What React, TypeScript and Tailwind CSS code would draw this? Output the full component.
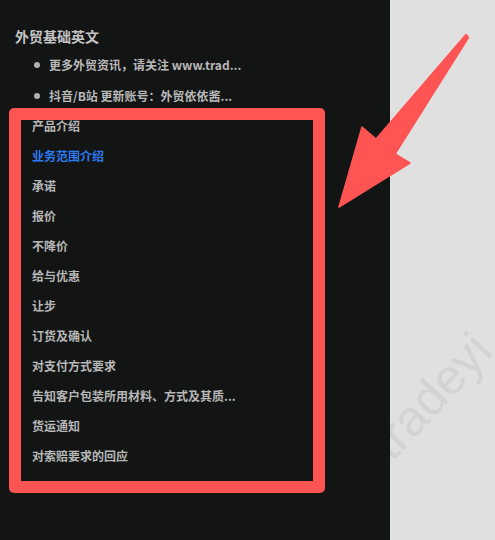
import React from 'react';

const font = { fontFamily: '"Noto Sans CJK SC", "Liberation Sans", sans-serif' };

const App: React.FC = () => {
  const bullets = ['更多外贸资讯，请关注 www.trad...', '抖音/B站 更新账号：外贸依依酱...'];
  const items = [
    '产品介绍',
    '业务范围介绍',
    '承诺',
    '报价',
    '不降价',
    '给与优惠',
    '让步',
    '订货及确认',
    '对支付方式要求',
    '告知客户包装所用材料、方式及其质...',
    '货运通知',
    '对索赔要求的回应',
  ];

  return (
    <div className="relative flex w-[495px] h-[540px] overflow-hidden" style={font}>
      <div className="w-[390px] h-full bg-[#131515] pt-[26px]">
        <h2 className="pl-[15px] h-[20px] leading-[20px] text-[14px] font-bold text-[#c4c4c4]">外贸基础英文</h2>
        <ul className="mt-[4px]">
          {bullets.map((b, i) => (
            <li key={i} className="flex items-center h-[30px] mb-px pl-[34px] text-[12px] font-bold text-[#b8b8b8]">
              <span className="w-[6px] h-[6px] rounded-full bg-[#b0b0b0] mr-[9px]"></span>
              {b}
            </li>
          ))}
        </ul>
        <ul className="-mt-px">
          {items.map((it, i) => (
            <li
              key={i}
              className={`flex items-center h-[30px] pl-[32px] text-[12px] font-bold ${i === 1 ? 'text-[#2b7cf2]' : 'text-[#b6b6b6]'}`}
            >
              {it}
            </li>
          ))}
        </ul>
      </div>

      <div className="relative flex-1 h-full bg-[#e0e0e0] overflow-hidden">
        {/* watermark */}
        <span
          className="absolute left-[8px] top-[418px] origin-[0_100%] -rotate-[47deg] whitespace-nowrap text-[50px] leading-none text-[#d3d3d3]"
          style={{ fontFamily: '"Liberation Sans", sans-serif' }}
        >
          tradeyi
        </span>
      </div>

      {/* annotation box */}
      <div className="absolute left-[9px] top-[108px] w-[316px] h-[385px] border-[12px] border-[#fe5453] rounded-[5px] pointer-events-none"></div>

      {/* annotation arrow */}
      <svg className="absolute inset-0 pointer-events-none" width="495" height="540" viewBox="0 0 495 540">
        <path
          d="M466 34.5 L468.5 37.5 L395 154 L410 163 L339 207 L362 127 L376 139 Z"
          fill="#fe5453"
          stroke="#fe5453"
          strokeWidth="1.5"
          strokeLinejoin="round"
        />
      </svg>
    </div>
  );
};

export default App;
